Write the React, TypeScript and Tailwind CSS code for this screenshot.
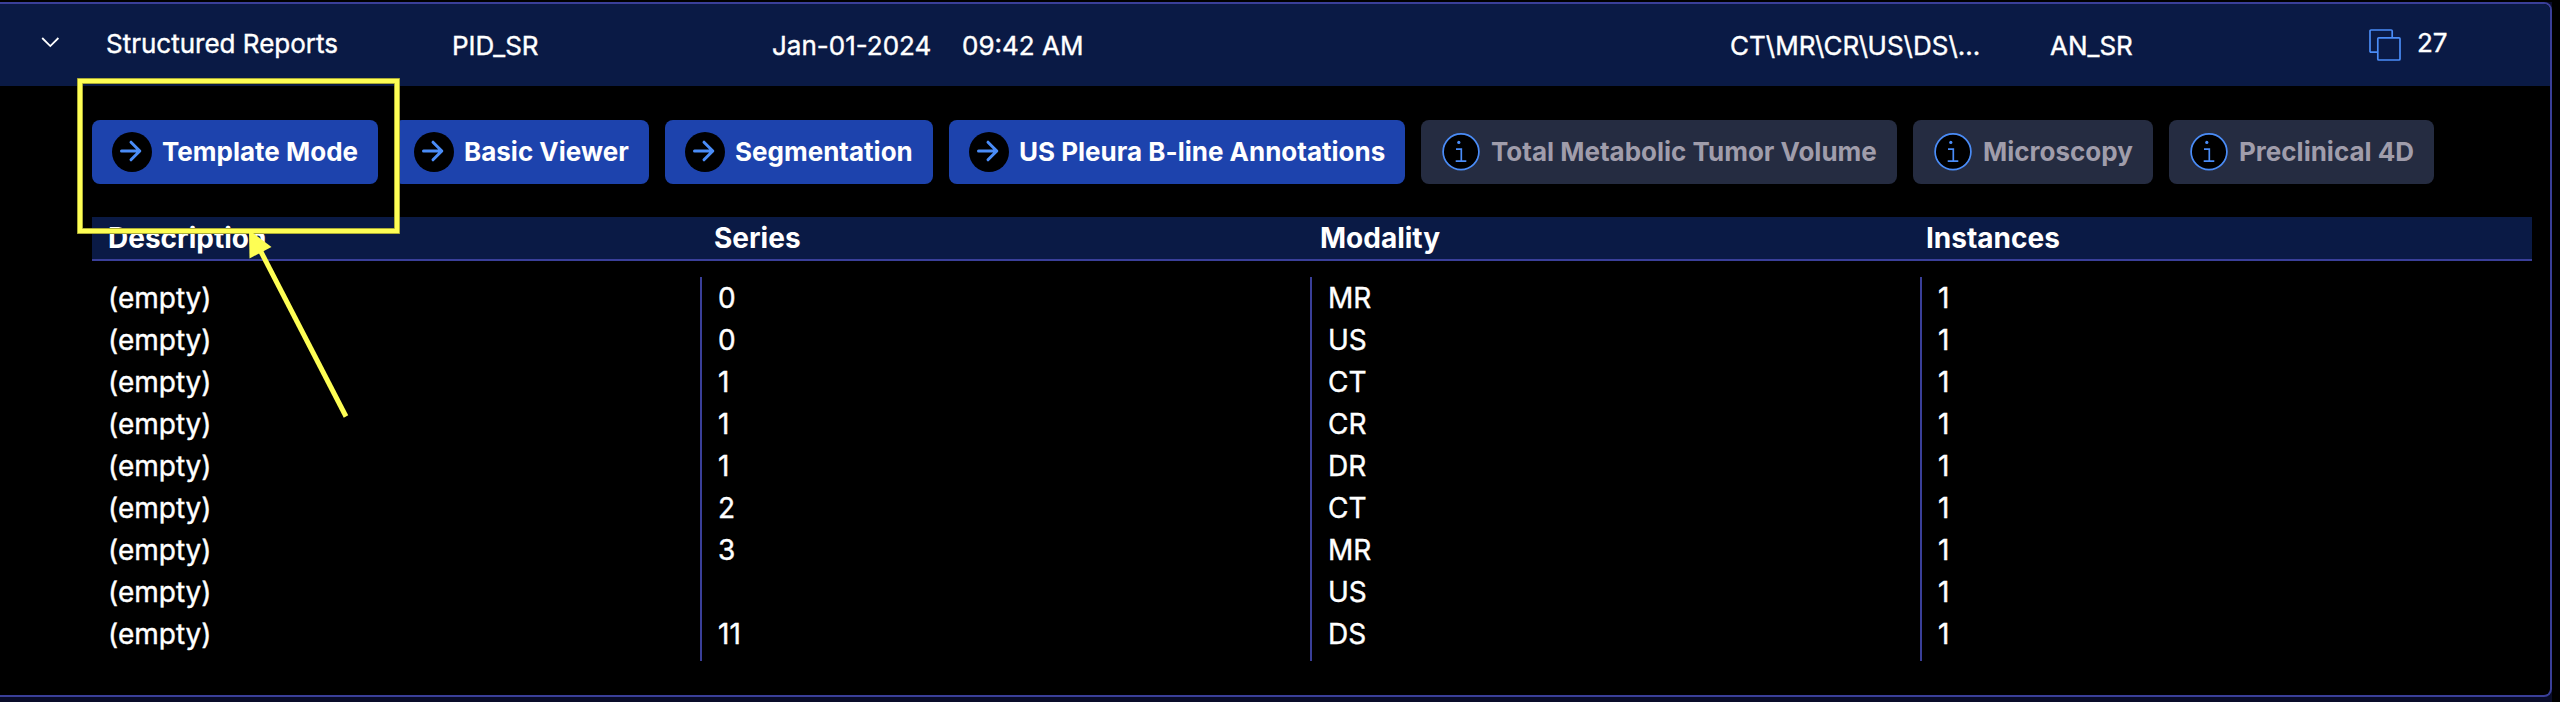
const BUTTONS = [
  { label: "Template Mode", on: true, w: "w-[286px]" },
  { label: "Basic Viewer", on: true, w: "w-[255px]" },
  { label: "Segmentation", on: true, w: "w-[268px]" },
  { label: "US Pleura B-line Annotations", on: true, w: "w-[456px]" },
  { label: "Total Metabolic Tumor Volume", on: false, w: "w-[476px]" },
  { label: "Microscopy", on: false, w: "w-[240px]" },
  { label: "Preclinical 4D", on: false, w: "w-[265px]" },
];

const COLUMNS = [
  { title: "Description", cells: Array(9).fill("(empty)") },
  { title: "Series", cells: ["0", "0", "1", "1", "1", "2", "3", "", "11"] },
  { title: "Modality", cells: ["MR", "US", "CT", "CR", "DR", "CT", "MR", "US", "DS"] },
  { title: "Instances", cells: Array(9).fill("1") },
];

function LaunchIcon() {
  return (
    <svg className="size-10 shrink-0" viewBox="0 0 40 40" fill="none">
      <circle cx="20" cy="20" r="20" fill="#000" />
      <path d="M9.5 19H27.8M19 10.2l8.8 8.8-8.8 8.8" stroke="#4a8cf7" strokeWidth="3" strokeLinecap="round" strokeLinejoin="round" />
    </svg>
  );
}

function InfoIcon() {
  return (
    <svg className="size-10 shrink-0" viewBox="0 0 40 40" fill="none">
      <circle cx="20" cy="19.8" r="17.9" fill="#000" stroke="#4a8cf7" strokeWidth="1.7" />
      <path d="M15 17.2h5.3V29.2M14.7 29.2h10.6" stroke="#4a8cf7" strokeWidth="1.7" />
      <circle cx="17.8" cy="10.4" r="1.6" fill="#4a8cf7" />
    </svg>
  );
}

export default function App() {
  return (
    <div className="relative h-[702px] w-[2560px] overflow-hidden bg-black pt-0.5 font-['Inter',sans-serif] text-[28px] leading-[42px] text-white">
      <div className="h-[700px] w-[2552px] bg-[#090c29]">
        <div className="flex h-[695px] w-[2552px] flex-col overflow-hidden rounded-r-lg border-y-2 border-r-2 border-[#3a3f99] bg-black">
          <header className="flex h-[82px] shrink-0 bg-[#0a1a45] text-[26px] [-webkit-text-stroke:0.4px_white]">
            <div className="w-[106px] pt-[31px] pl-[40px]">
              <svg width="20" height="14" viewBox="0 0 20 14" fill="none">
                <path d="M2.2 3l8.1 8.1L18.4 3" stroke="#fff" strokeWidth="1.8" />
              </svg>
            </div>
            <div className="w-[346px] pt-[19px]">Structured Reports</div>
            <div className="w-[320px] pt-[21px]">PID_SR</div>
            <div className="w-[190px] pt-[21px]">Jan-01-2024</div>
            <div className="w-[768px] pt-[21px]">09:42 AM</div>
            <div className="w-[320px] pt-[21px]">CT\MR\CR\US\DS\...</div>
            <div className="w-[319px] pt-[21px]">AN_SR</div>
            <svg className="mt-[25px] w-8" height="32" viewBox="0 0 32 32" fill="none" stroke="#4a8cf7" strokeWidth="1.7">
              <path d="M8.8 23.2H2a1 1 0 0 1-1-1V2a1 1 0 0 1 1-1h20.2a1 1 0 0 1 1 1V8.8" />
              <rect x="8.8" y="8.8" width="22.2" height="22.2" rx="1" />
            </svg>
            <div className="pt-[18px] pl-4">27</div>
          </header>
          <div className="mt-[34px] flex gap-4 pl-[92px] text-[26px] font-bold">
            {BUTTONS.map((b) => (
              <button
                key={b.label}
                className={`${b.w} flex h-16 shrink-0 items-center gap-[10px] rounded-lg pl-5 whitespace-nowrap ${b.on ? "bg-[#1d43ad]" : "bg-[#252c41] text-[#a09dab]"}`}
              >
                {b.on ? <LaunchIcon /> : <InfoIcon />}
                <span>{b.label}</span>
              </button>
            ))}
          </div>
          <div className="mt-[33px] ml-[92px] flex h-11 w-[2440px] shrink-0 border-b-2 border-[#3a3f99] bg-[#0a1a45] pl-4 font-bold">
            {COLUMNS.map((c) => (
              <div key={c.title} className="w-[606px]">{c.title}</div>
            ))}
          </div>
          <div className="mt-4 ml-[92px] flex h-[384px] w-[2440px] shrink-0 [-webkit-text-stroke:0.4px_white]">
            {COLUMNS.map((c, i) => (
              <div key={c.title} className={i ? "w-[610px] border-l-2 border-[#3a3f99] pl-4" : "w-[608px] pl-4"}>
                {c.cells.map((v, j) => (
                  <div key={j} className="h-[42px]">{v}</div>
                ))}
              </div>
            ))}
          </div>
        </div>
      </div>
      <svg className="absolute top-0 left-0" width="420" height="430" fill="none">
        <rect x="80" y="81" width="317" height="150" stroke="#96962f" strokeWidth="6" />
        <rect x="80" y="81" width="317" height="150" stroke="#fefe54" strokeWidth="4.4" />
        <path d="M258 246L346 416.500" stroke="#fefe54" strokeWidth="5" />
        <path d="M249 231h1.500l21 16-22 11.500z" fill="#fefe54" />
      </svg>
    </div>
  );
}
